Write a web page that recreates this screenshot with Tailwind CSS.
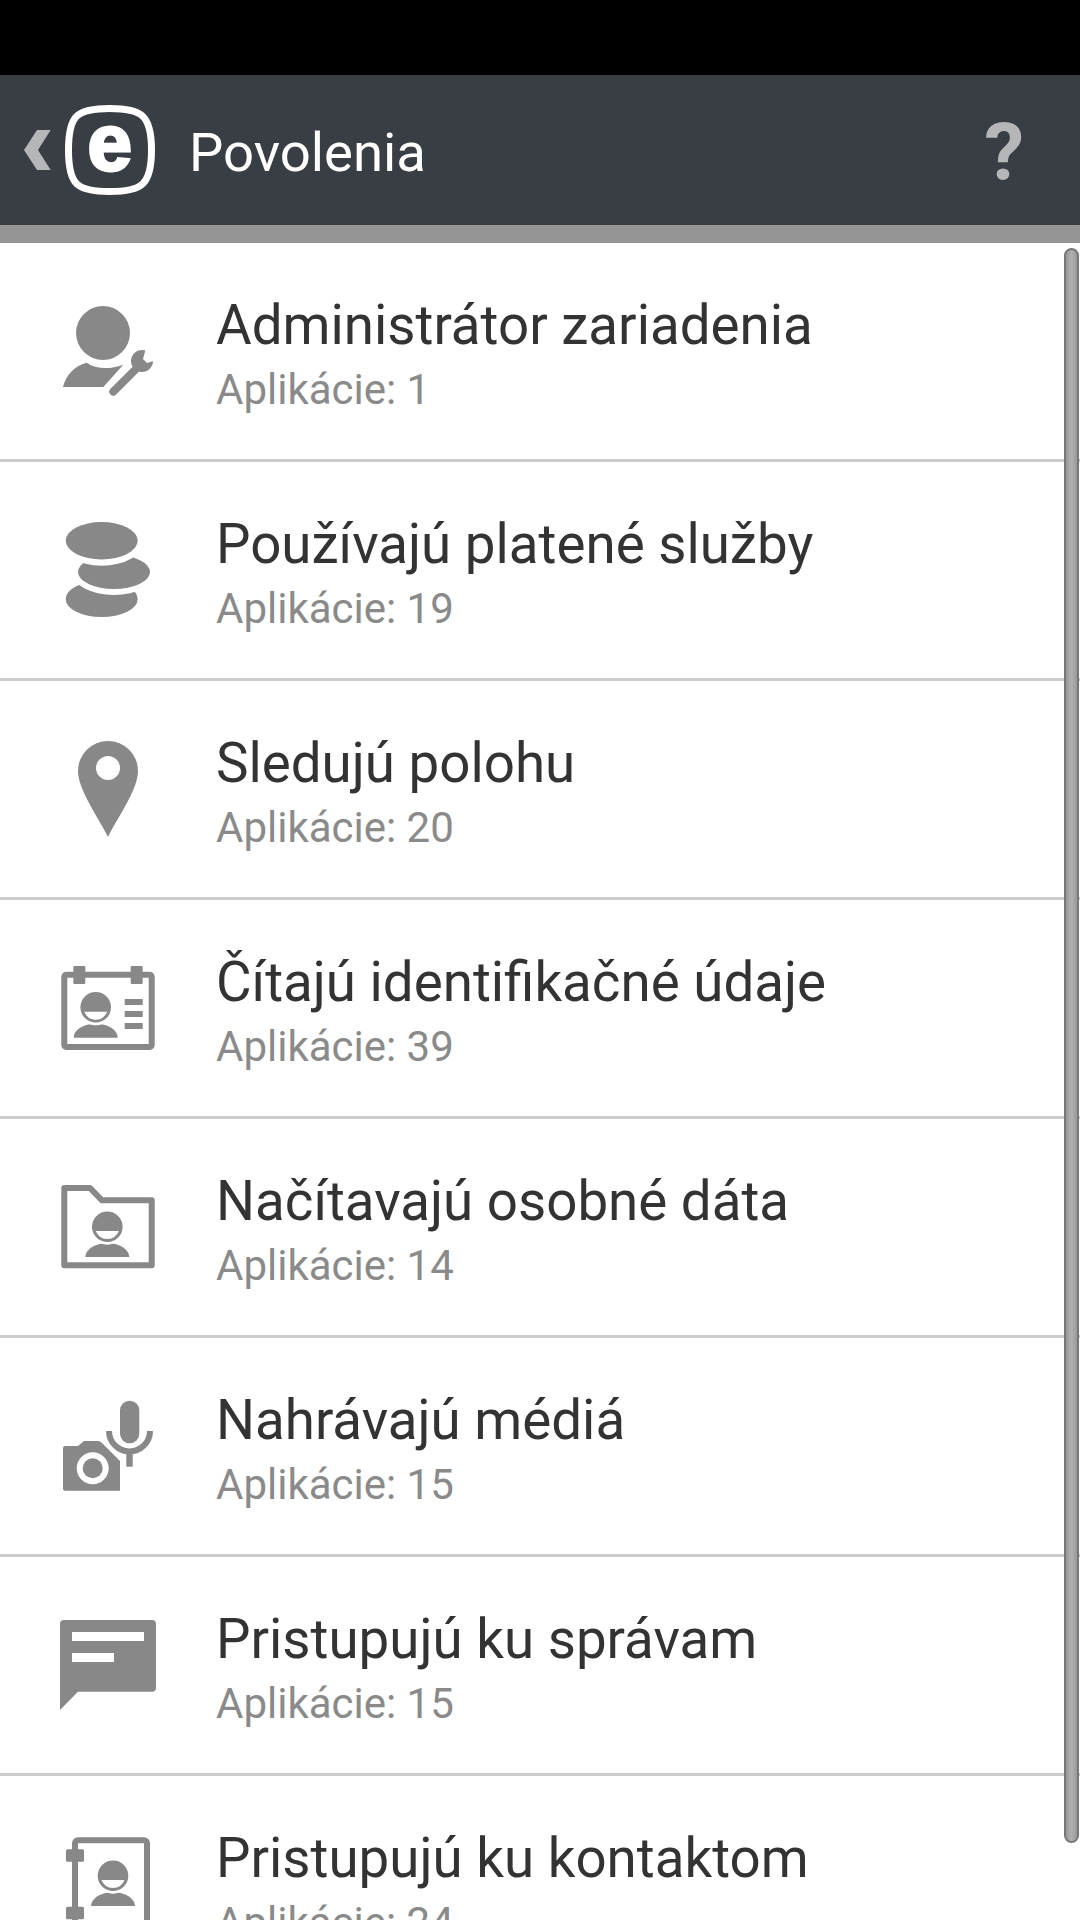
<!DOCTYPE html>
<html lang="sk">
<head>
  <meta charset="UTF-8" />
  <title>Povolenia</title>
  <script src="https://cdn.jsdelivr.net/npm/@tailwindcss/browser@4"></script>
</head>
<body class="bg-white">
  <div class="relative w-[1080px] h-[1920px] overflow-hidden bg-white font-['Roboto',sans-serif]">

    <!-- shared person glyph, origin is the centre of the head -->
    <svg class="hidden">
      <defs>
        <g id="face">
          <path d="M-22 30.4A22 14 0 0 1 22 30.4Z" fill="#888" />
          <circle r="18" fill="#fff" />
          <circle r="15.3" fill="#888" />
          <path d="M-11.5 4.4H11.5A12.3 12.3 0 0 1 -11.5 4.4Z" fill="#fff" />
        </g>
      </defs>
    </svg>

    <!-- status bar -->
    <div class="h-[75px] bg-black"></div>

    <!-- header -->
    <header class="h-[150px] bg-[#393d44] flex items-center">
      <svg class="w-[160px] h-[150px] shrink-0" viewBox="0 75 160 150">
        <path d="M50.700 130H37L24 150L37 170H50.700L38 150Z" fill="#b4b6b8" />
        <path d="M109.700 108.500C125 108.500 136 110 142.500 116C149 122 151.500 134 151.500 150C151.500 166 149 178 142.500 184C136 190 125 191.500 109.700 191.500C94.400 191.500 83.400 190 76.900 184C70.400 178 68.500 166 68.500 150C68.500 134 70.400 122 76.900 116C83.400 110 94.400 108.500 109.700 108.500Z" fill="none" stroke="#fff" stroke-width="7" />
        <text x="109.700" y="170" text-anchor="middle" fill="#fff" stroke="#fff" stroke-width="3" font-family="'Liberation Sans',sans-serif" font-weight="700" font-size="80">e</text>
      </svg>
      <h1 class="ml-[29px] mt-[4px] text-[54.500px] leading-[60px] text-white font-normal">Povolenia</h1>
      <span class="ml-auto mr-[56px] mt-[5px] text-[80px] leading-none font-bold text-[#b4b6b8]">?</span>
    </header>
    <div class="h-[18px] bg-[#959595]"></div>

    <!-- list -->
    <ul>
      <li class="h-[219px] border-b-3 border-[#ccc] flex items-center">
        <svg class="ml-[50px] w-[110px] h-[110px] shrink-0" viewBox="50 296 110 110">
          <circle cx="103" cy="333" r="27" fill="#888" />
          <path d="M63 387C66 375 74 366 86.700 362.700C96 369.500 110 369.500 123.300 364.700L103.300 387Z" fill="#888" />
          <path d="M113.300 391.700L140 365" stroke="#888" stroke-width="8" stroke-linecap="round" />
          <circle cx="142" cy="361" r="11" fill="#888" />
          <path d="M146 348L143 359L147 363L157 360L157 348Z" fill="#fff" />
        </svg>
        <div class="ml-[56px] self-start pt-[52px]">
          <p class="text-[54.700px] leading-[60px] text-[#333]">Administrátor zariadenia</p>
          <p class="mt-3 text-[42px] leading-[46px] text-[#8a8a8a]">Aplikácie: 1</p>
        </div>
      </li>
      <li class="h-[219px] border-b-3 border-[#ccc] flex items-center">
        <svg class="ml-[50px] w-[110px] h-[110px] shrink-0" viewBox="50 515 110 110">
          <ellipse cx="101.700" cy="599" rx="36" ry="18" fill="#888" />
          <ellipse cx="114" cy="572" rx="42" ry="23" fill="#fff" />
          <ellipse cx="114" cy="572" rx="36" ry="17" fill="#888" />
          <ellipse cx="101.700" cy="540.700" rx="42" ry="25" fill="#fff" />
          <ellipse cx="101.700" cy="540.700" rx="36" ry="18.700" fill="#888" />
        </svg>
        <div class="ml-[56px] self-start pt-[52px]">
          <p class="text-[54.700px] leading-[60px] text-[#333]">Používajú platené služby</p>
          <p class="mt-3 text-[42px] leading-[46px] text-[#8a8a8a]">Aplikácie: 19</p>
        </div>
      </li>
      <li class="h-[219px] border-b-3 border-[#ccc] flex items-center">
        <svg class="ml-[50px] w-[110px] h-[110px] shrink-0" viewBox="50 734 110 110">
          <path d="M108 837C100 820 78 790 78 771A30 30 0 0 1 138 771C138 790 116 820 108 837Z" fill="#888" />
          <circle cx="108" cy="768" r="12" fill="#fff" />
        </svg>
        <div class="ml-[56px] self-start pt-[52px]">
          <p class="text-[54.700px] leading-[60px] text-[#333]">Sledujú polohu</p>
          <p class="mt-3 text-[42px] leading-[46px] text-[#8a8a8a]">Aplikácie: 20</p>
        </div>
      </li>
      <li class="h-[219px] border-b-3 border-[#ccc] flex items-center">
        <svg class="ml-[50px] w-[110px] h-[110px] shrink-0" viewBox="50 953 110 110">
          <rect x="64.300" y="974.700" width="87.400" height="72.300" rx="2" fill="none" stroke="#888" stroke-width="6" />
          <rect x="73.300" y="966" width="12" height="18" rx="1" fill="#888" />
          <rect x="130.700" y="966" width="12" height="18" rx="1" fill="#888" />
          <use href="#face" x="95.700" y="1007.300" />
          <path d="M124.700 999h18v6h-18zM124.700 1011h18v6h-18zM124.700 1023h18v6h-18z" fill="#888" />
        </svg>
        <div class="ml-[56px] self-start pt-[52px]">
          <p class="text-[54.700px] leading-[60px] text-[#333]">Čítajú identifikačné údaje</p>
          <p class="mt-3 text-[42px] leading-[46px] text-[#8a8a8a]">Aplikácie: 39</p>
        </div>
      </li>
      <li class="h-[219px] border-b-3 border-[#ccc] flex items-center">
        <svg class="ml-[50px] w-[110px] h-[110px] shrink-0" viewBox="50 1172 110 110">
          <path d="M64.300 1188H90L102 1200.300H151.700V1265.300H64.300Z" fill="none" stroke="#888" stroke-width="6" stroke-linejoin="round" />
          <use href="#face" x="107.300" y="1226.700" />
        </svg>
        <div class="ml-[56px] self-start pt-[52px]">
          <p class="text-[54.700px] leading-[60px] text-[#333]">Načítavajú osobné dáta</p>
          <p class="mt-3 text-[42px] leading-[46px] text-[#8a8a8a]">Aplikácie: 14</p>
        </div>
      </li>
      <li class="h-[219px] border-b-3 border-[#ccc] flex items-center">
        <svg class="ml-[50px] w-[110px] h-[110px] shrink-0" viewBox="50 1391 110 110">
          <path d="M65 1446H78L84 1441H98Q100 1441 102 1443L120 1461V1490.700H65Q63 1490.700 63 1488.700V1448Q63 1446 65 1446Z" fill="#888" />
          <circle cx="92.700" cy="1468.300" r="16" fill="#fff" />
          <circle cx="92.700" cy="1468.300" r="10" fill="#888" />
          <rect x="120" y="1400.700" width="19.300" height="42.600" rx="9.650" fill="#888" />
          <path d="M109 1431A20.500 20.500 0 0 0 150 1431" fill="none" stroke="#888" stroke-width="6" />
          <rect x="126.300" y="1450" width="6.400" height="16.700" fill="#888" />
        </svg>
        <div class="ml-[56px] self-start pt-[52px]">
          <p class="text-[54.700px] leading-[60px] text-[#333]">Nahrávajú médiá</p>
          <p class="mt-3 text-[42px] leading-[46px] text-[#8a8a8a]">Aplikácie: 15</p>
        </div>
      </li>
      <li class="h-[219px] border-b-3 border-[#ccc] flex items-center">
        <svg class="ml-[50px] w-[110px] h-[110px] shrink-0" viewBox="50 1610 110 110">
          <path d="M64 1620H152Q156 1620 156 1624V1687.700Q156 1691.700 152 1691.700H78L60 1710V1624Q60 1620 64 1620Z" fill="#888" />
          <path d="M72 1632h72v9h-72zM72 1653h42v9h-42z" fill="#fff" />
        </svg>
        <div class="ml-[56px] self-start pt-[52px]">
          <p class="text-[54.700px] leading-[60px] text-[#333]">Pristupujú ku správam</p>
          <p class="mt-3 text-[42px] leading-[46px] text-[#8a8a8a]">Aplikácie: 15</p>
        </div>
      </li>
      <li class="h-[219px] border-b-3 border-[#ccc] flex items-center">
        <svg class="ml-[50px] w-[110px] h-[110px] shrink-0" viewBox="50 1829 110 110">
          <rect x="75" y="1840.300" width="72" height="100" rx="3" fill="none" stroke="#888" stroke-width="6" />
          <rect x="66" y="1849.300" width="18" height="12.400" rx="1.500" fill="#888" />
          <rect x="66" y="1906.700" width="18" height="12.600" rx="1.500" fill="#888" />
          <use href="#face" x="113" y="1875.700" />
        </svg>
        <div class="ml-[56px] self-start pt-[52px]">
          <p class="text-[54.700px] leading-[60px] text-[#333]">Pristupujú ku kontaktom</p>
          <p class="mt-3 text-[42px] leading-[46px] text-[#8a8a8a]">Aplikácie: 24</p>
        </div>
      </li>
    </ul>

    <!-- scrollbar -->
    <div class="absolute left-[1064px] top-[248px] w-[15px] h-[1595px] rounded-full border-2 border-[#777] bg-linear-to-r from-[#999] via-[#b0b0b0] to-[#999]"></div>
  </div>
</body>
</html>
